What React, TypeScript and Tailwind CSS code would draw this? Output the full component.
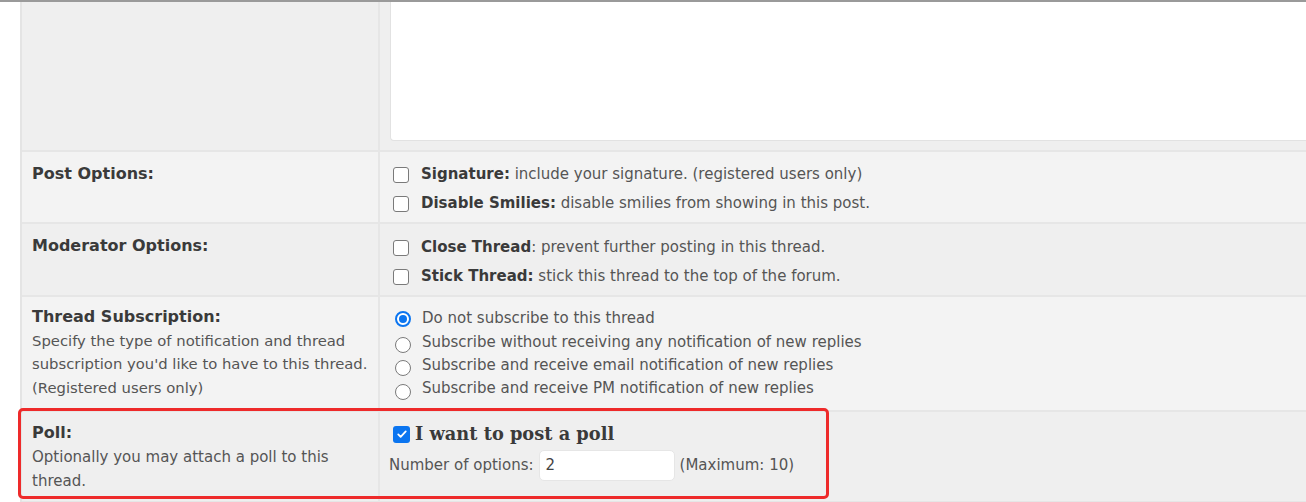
import React from 'react';

const font = { fontFamily: '"DejaVu Sans", Verdana, sans-serif' };

const Box: React.FC<{ checked?: boolean }> = ({ checked }) =>
  checked ? (
    <span className="inline-flex h-[17px] w-[17px] shrink-0 items-center justify-center rounded-[3px] bg-[#0b75f0]">
      <svg viewBox="0 0 16 16" className="h-[12px] w-[12px]" fill="none" stroke="white" strokeWidth="2.4" strokeLinecap="round" strokeLinejoin="round">
        <path d="M3 8.5l3.2 3.2L13 4.5" />
      </svg>
    </span>
  ) : (
    <span className="inline-block h-[16px] w-[16px] shrink-0 rounded-[3px] border border-[#7a7a7a] bg-white" />
  );

const Radio: React.FC<{ checked?: boolean }> = ({ checked }) =>
  checked ? (
    <span className="inline-flex h-[16px] w-[16px] shrink-0 items-center justify-center rounded-full border-2 border-[#0b75f0] bg-white">
      <span className="h-[8px] w-[8px] rounded-full bg-[#0b75f0]" />
    </span>
  ) : (
    <span className="mt-[6px] inline-block h-[16px] w-[16px] shrink-0 rounded-full border border-[#7a7a7a] bg-white" />
  );

const CheckLine: React.FC<{ title: string; text: string }> = ({ title, text }) => (
  <div className="flex h-[29px] items-center gap-[12px]">
    <Box />
    <span>
      <b className="text-[#3a3a3a]">{title}</b>
      <span className="text-[#555]">{text}</span>
    </span>
  </div>
);

const RadioLine: React.FC<{ checked?: boolean; text: string }> = ({ checked, text }) => (
  <div className="flex h-[23.3px] items-center gap-[11px] text-[#555]">
    <Radio checked={checked} />
    <span>{text}</span>
  </div>
);

export default function App() {
  return (
    <div className="h-[502px] w-[1306px] overflow-hidden bg-white text-[15px]" style={font}>
      <div className="h-[2px] bg-[#9a9a9a]" />
      <div className="relative ml-[20px] border-l-2 border-[#e4e4e4]">
        <div className="grid grid-cols-[356px_1fr] grid-rows-[148px_70px_71px_113px_89px] gap-[2px] border-b-2 border-[#e6e6e6] bg-[#e6e6e6]">
          {/* message */}
          <div className="bg-[#efefef]" />
          <div className="bg-[#efefef] pb-[9px] pl-[10px]">
            <div className="h-full rounded-bl-[4px] border-b border-l border-[#e2e2e2] bg-white" />
          </div>

          {/* post options */}
          <div className="bg-[#f3f3f3] px-[10px] pt-[10px] text-[16px] font-bold text-[#3a3a3a]">Post Options:</div>
          <div className="bg-[#f3f3f3] pl-[13px] pt-[8px]">
            <CheckLine title="Signature:" text=" include your signature. (registered users only)" />
            <CheckLine title="Disable Smilies:" text=" disable smilies from showing in this post." />
          </div>

          {/* moderator */}
          <div className="bg-[#efefef] px-[10px] pt-[10px] text-[16px] font-bold text-[#3a3a3a]">Moderator Options:</div>
          <div className="bg-[#efefef] pl-[13px] pt-[9px]">
            <CheckLine title="Close Thread" text=": prevent further posting in this thread." />
            <CheckLine title="Stick Thread:" text=" stick this thread to the top of the forum." />
          </div>

          {/* subscription */}
          <div className="bg-[#f3f3f3] pl-[10px] pt-[8px] leading-[23.5px]">
            <div className="text-[16px] font-bold text-[#3a3a3a]">Thread Subscription:</div>
            <div className="text-[14.8px] text-[#555]">
              Specify the type of notification and thread subscription you'd like to have to this thread. (Registered users only)
            </div>
          </div>
          <div className="bg-[#f3f3f3] pl-[15px] pt-[10px]">
            <RadioLine checked text="Do not subscribe to this thread" />
            <RadioLine text="Subscribe without receiving any notification of new replies" />
            <RadioLine text="Subscribe and receive email notification of new replies" />
            <RadioLine text="Subscribe and receive PM notification of new replies" />
          </div>

          {/* poll */}
          <div className="bg-[#efefef] px-[10px] pt-[9px] leading-[24px]">
            <div className="text-[16px] font-bold text-[#3a3a3a]">Poll:</div>
            <div className="text-[#555]">Optionally you may attach a poll to this thread.</div>
          </div>
          <div className="bg-[#efefef] pl-[13px] pt-[9px]">
            <div className="flex items-center gap-[5px]">
              <Box checked />
              <b className="text-[17.8px] text-[#3a3a3a]" style={{ fontFamily: '"DejaVu Serif", Georgia, serif' }}>I want to post a poll</b>
            </div>
            <div className="mt-[2px] flex items-center gap-[5px] text-[#555]">
              <span className="-ml-[4px]">Number of options:</span>
              <span className="flex h-[31px] w-[136px] items-center rounded-[5px] border border-[#e6e6e6] bg-white px-[6px] text-[#444]">2</span>
              <span>(Maximum: 10)</span>
            </div>
          </div>
        </div>
        <div className="pointer-events-none absolute left-[-4px] top-[406px] h-[91px] w-[811px] rounded-[5px] border-[3px] border-[#ee2a2a]" />
      </div>
    </div>
  );
}
